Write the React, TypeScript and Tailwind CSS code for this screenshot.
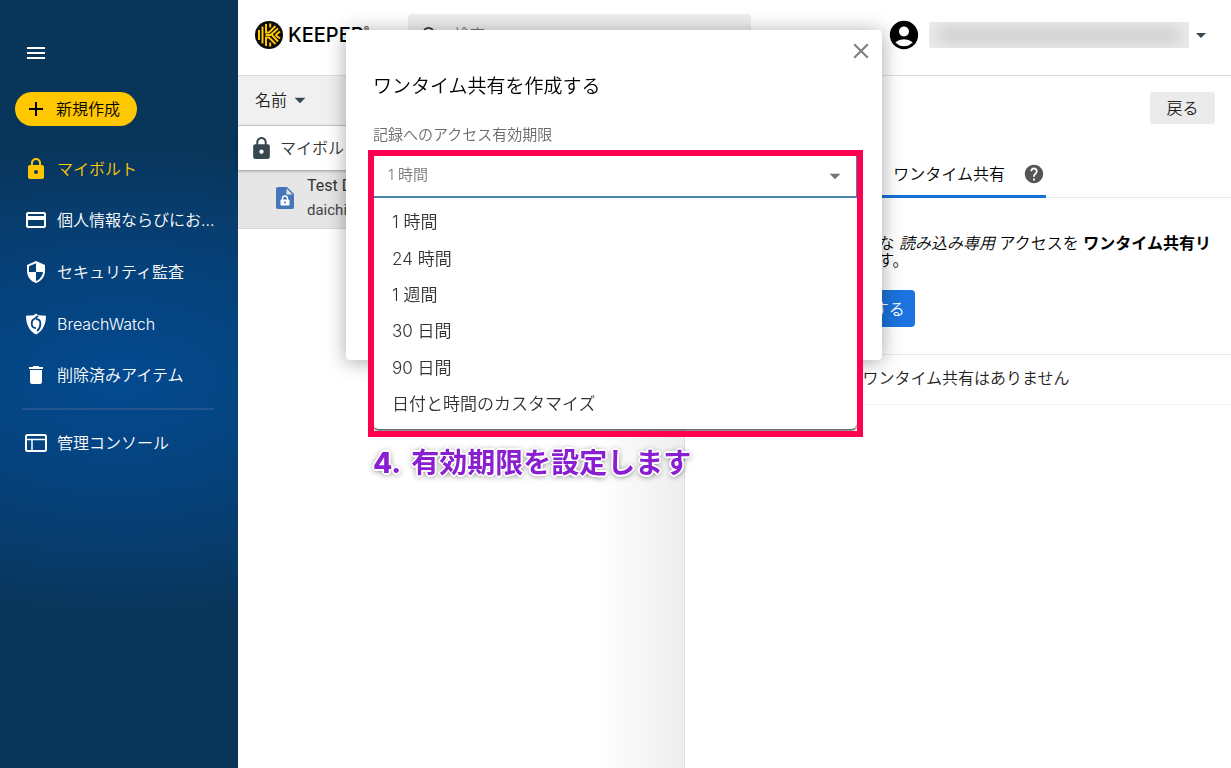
import { useState, type ReactNode } from 'react';
import { clsx } from 'clsx';
import {
  MdAccountCircle,
  MdAdd,
  MdArrowDropDown,
  MdClose,
  MdCreditCard,
  MdDelete,
  MdHelp,
  MdLock,
  MdMenu,
  MdSearch,
  MdSecurity,
} from 'react-icons/md';

const EXPIRY_OPTIONS = ['1 時間', '24 時間', '1 週間', '30 日間', '90 日間', '日付と時間のカスタマイズ'];

function BreachWatchIcon() {
  return (
    <svg viewBox="0 0 24 24" className="h-6 w-6" aria-hidden="true">
      <path d="M12 1.500 14.500 3.200 22 3.800C22 12 19 19 12 22.500 5 19 2 12 2 3.800L9.500 3.200Z" fill="white" />
      <path d="M14 3.800 11 6.500C8.800 7.300 7.700 9 7.700 11.200c0 2.800 1.800 4.800 4.300 4.900" fill="none" stroke="#044583" strokeWidth="1.800" />
      <path d="M12 7.200c2.600 0 4.400 1.800 4.400 4.500 0 3-1.200 5.400-3.200 7.300" fill="none" stroke="#044583" strokeWidth="1.800" />
      <circle cx="12" cy="11.700" r="2.400" fill="white" />
    </svg>
  );
}

function ConsoleIcon() {
  return (
    <svg viewBox="0 0 24 24" className="h-6 w-6" fill="none" stroke="currentColor" aria-hidden="true">
      <rect x="2" y="4" width="20" height="16" rx="1.500" strokeWidth="2" />
      <path d="M2 8.500h20M8 8.500V20" strokeWidth="1.500" />
    </svg>
  );
}

function KeeperMark() {
  return (
    <svg viewBox="0 0 28 28" className="h-7 w-7 shrink-0" aria-hidden="true">
      <circle cx="14" cy="14" r="14" fill="#0b0b0b" />
      <g fill="none" stroke="#ffc700" strokeWidth="2">
        <path d="M4 9v10M7.500 5.500v17" />
        <path d="M11 3v8.500h3l6.500-6.500M15.200 2.500v4" />
        <path d="M11 25v-8.500h3l6.500 6.500M15.200 25.500v-4" />
        <path d="M10.500 14h5l7.500-6.500M17 14l6 6.500M20.500 14l4.500-3.500M20.500 14l4.500 3.500" />
      </g>
    </svg>
  );
}

function RecordIcon() {
  return (
    <svg viewBox="0 0 18 22" className="h-[22px] w-[18px] shrink-0" aria-hidden="true">
      <path d="M2 0h9l7 7v13a2 2 0 0 1-2 2H2a2 2 0 0 1-2-2V2a2 2 0 0 1 2-2z" fill="#4576b9" />
      <path d="M10.500 1.500v6H16.500z" fill="#e6e6e6" />
      <rect x="4.500" y="12.500" width="9" height="6" rx="0.800" fill="white" />
      <path d="M6.500 13v-1.500a2.500 2.500 0 0 1 5 0V13" fill="none" stroke="white" strokeWidth="1.300" />
      <circle cx="9" cy="15.500" r="1" fill="#4576b9" />
    </svg>
  );
}

interface NavItemProps {
  icon: ReactNode;
  label: string;
  active?: boolean;
}

function NavItem({ icon, label, active = false }: NavItemProps) {
  return (
    <a
      href="#"
      className={clsx('flex flex-1 items-center gap-[9px] pl-6', active ? 'text-[#ffc700]' : 'text-white')}
    >
      {icon}
      <span className="whitespace-nowrap">{label}</span>
    </a>
  );
}

function Sidebar() {
  return (
    <aside className="flex w-[238px] shrink-0 flex-col bg-[#08355a] bg-[radial-gradient(ellipse_420px_235px_at_50%_380px,#034a90_0%,#05427c_45%,#083c6c_75%,#08355a_100%)]">
      <button type="button" aria-label="メニュー" className="mt-[41px] ml-6 h-6 w-6 text-white">
        <MdMenu size={24} />
      </button>
      <button
        type="button"
        className="mt-[27px] ml-[15px] flex h-[34px] w-[122px] items-center gap-2 rounded-full bg-[#ffc700] pl-[9px] text-black"
      >
        <MdAdd size={24} />
        新規作成
      </button>
      <nav className="mt-[17px] flex h-[258px] flex-col">
        <NavItem active icon={<MdLock size={24} />} label="マイボルト" />
        <NavItem icon={<MdCreditCard size={24} />} label="個人情報ならびにお..." />
        <NavItem icon={<MdSecurity size={24} />} label="セキュリティ監査" />
        <NavItem
          icon={<BreachWatchIcon />}
          label="BreachWatch"
        />
        <NavItem icon={<MdDelete size={24} />} label="削除済みアイテム" />
      </nav>
      <hr className="mr-6 ml-[22px] mt-[7px] border-t-2 border-[#24558f]" />
      <nav className="mt-[7px] flex h-[52px] flex-col">
        <NavItem icon={<ConsoleIcon />} label="管理コンソール" />
      </nav>
    </aside>
  );
}

function Header() {
  return (
    <header className="flex h-[76px] shrink-0 items-center border-b border-[#dcdcdc] pb-1.5 pl-[17px]">
      <KeeperMark />
      <div className="ml-[5px] flex w-[120px] items-start font-['Inter'] text-xl leading-none font-medium text-black">
        KEEPER<span className="text-[8px]">®</span>
      </div>
      <label className="flex h-[42px] w-[343px] items-center gap-3 rounded bg-[#eeeeee] pl-3 text-[#333]">
        <MdSearch size={24} />
        <input type="search" placeholder="検索" className="w-full bg-transparent outline-none placeholder:text-[#777]" />
      </label>
      <button type="button" className="mr-[26px] ml-auto flex items-center gap-2" aria-label="アカウント">
        <MdAccountCircle size={34} className="text-black" />
        <span className="h-[26px] w-[260px] overflow-hidden bg-[#ececec]">
          <span className="mx-2 mt-1.5 block h-[14px] rounded bg-[#c8c8c8] blur-sm" />
        </span>
        <MdArrowDropDown size={24} className="-mx-2 text-[#37474f]" />
      </button>
    </header>
  );
}

function RecordList() {
  return (
    <section className="w-[447px] shrink-0 border-r border-[#dedede] bg-linear-to-r from-white from-80% to-[#eeeeee]">
      <button
        type="button"
        className="flex h-[50px] w-full items-center border-b border-[#cfcfcf] bg-[#f0f0f0] pb-0.5 pl-[17px] text-[#222]"
      >
        名前
        <MdArrowDropDown size={26} className="text-[#37474f]" />
      </button>
      <div className="relative flex h-[44px] items-center gap-1.5 bg-white pl-[11px] text-[#333] shadow-[0_1px_3px_rgba(0,0,0,0.35)]">
        <MdLock size={25} className="text-[#37474f]" />
        マイボルト
      </div>
      <a
        href="#"
        className="flex h-[59px] items-center gap-[13px] border-b border-[#d8d8d8] bg-[#e6e6e6] pb-0.5 pl-[38px] text-[#333]"
      >
        <RecordIcon />
        <span className="flex flex-col font-['Roboto'] leading-6 font-normal">
          <span>Test Data</span>
          <span className="text-[15px] text-[#444]">daichi</span>
        </span>
      </a>
    </section>
  );
}

function SharePanel() {
  return (
    <section className="min-w-0 flex-1">
      <div className="flex justify-end px-4 pt-4">
        <button type="button" className="h-8 w-[65px] rounded-[3px] bg-[#ebebeb] text-[#222]">
          戻る
        </button>
      </div>
      <div className="mt-7 flex h-[46px] border-b border-[#e8e8e8] pl-[19px]" role="tablist">
        <button
          type="button"
          role="tab"
          aria-selected="true"
          className="-mb-px flex w-[342px] items-center justify-end gap-[18px] border-b-[3px] border-[#1a6fd6] pr-px text-black"
        >
          ワンタイム共有
          <MdHelp size={22} className="text-[#555]" />
        </button>
      </div>
      <div className="border-b border-[#e8e8e8] pt-[37px] pr-2.5 pb-[27px] pl-[18px]">
        <p className="leading-[17px] text-black">
          指定したデバイスに安全な <em>読み込み専用</em> アクセスを{' '}
          <strong className="font-bold">ワンタイム共有リンク</strong>
          を使って共有できます。
        </p>
        <button type="button" className="mt-[21px] h-[37px] rounded bg-[#1b74df] px-2.5 text-white">
          ワンタイム共有を作成する
        </button>
      </div>
      <p className="flex h-[50px] items-center justify-center border-b border-[#f2f2f2] pb-1 pl-4 text-[#222]">
        ワンタイム共有はありません
      </p>
    </section>
  );
}

function ExpiryField() {
  const [value, setValue] = useState(EXPIRY_OPTIONS[0]);

  return (
    <div className="mt-6">
      <label htmlFor="expiry" className="block text-[15px] leading-5 text-[#6a6a6a]">
        記録へのアクセス有効期限
      </label>
      <div className="relative mt-2.5 w-[484px]">
        <div className="relative">
          <select
            id="expiry"
            value={value}
            onChange={(e) => setValue(e.target.value)}
            className="block h-[43px] w-full appearance-none border border-b-2 border-[#4a84a8] bg-white pb-0.5 pl-[14px] text-[15px] text-[#7a7a7a] outline-none"
          >
            {EXPIRY_OPTIONS.map((option) => (
              <option key={option}>{option}</option>
            ))}
          </select>
          <MdArrowDropDown size={26} className="pointer-events-none absolute top-2 right-[9px] text-[#757575]" />
        </div>
        {/* open menu */}
        <ul
          role="listbox"
          aria-label="有効期限"
          className="absolute top-full left-0 flex h-[231px] w-full flex-col rounded-b-md bg-white pt-[7px] pb-1.5 shadow-[0_2px_2px_rgba(0,0,0,0.6)]"
        >
          {EXPIRY_OPTIONS.map((option) => (
            <li key={option} role="option" aria-selected={option === value} className="flex flex-1">
              <button
                type="button"
                onClick={() => setValue(option)}
                className="flex-1 pl-[19px] text-left text-[17px] text-[#333]"
              >
                {option}
              </button>
            </li>
          ))}
        </ul>
        {/* highlight frame and caption */}
        <div className="pointer-events-none absolute -top-[5px] -left-[5px] h-[287px] w-[495px] border-[6px] border-[#ff0050]">
          <p className="absolute top-full -left-px mt-3.5 flex gap-2.5 text-[28px] leading-9 font-bold whitespace-nowrap text-[#8a1fd1] [text-shadow:-2px_0_#fff,2px_0_#fff,0_-2px_#fff,0_2px_#fff,-1px_-1px_#fff,1px_1px_#fff,1px_-1px_#fff,-1px_1px_#fff,0_1px_6px_rgba(0,0,0,0.8)]">
            <span className="font-extrabold">4.</span>
            <span>有効期限を設定します</span>
          </p>
        </div>
      </div>
    </div>
  );
}

function ShareDialog() {
  return (
    <div className="fixed inset-0 z-10 flex items-start justify-center pt-[30px] pr-[3px]">
      <div
        role="dialog"
        aria-labelledby="share-title"
        className="relative min-h-[330px] w-[536px] rounded bg-white px-[27px] pt-[43px] shadow-[0_2px_20px_rgba(0,0,0,0.35)]"
      >
        <button type="button" aria-label="閉じる" className="absolute top-2 right-2 text-[#808080]">
          <MdClose size={26} />
        </button>
        <h2 id="share-title" className="text-[19px] leading-7 font-[350] text-black">
          ワンタイム共有を作成する
        </h2>
        <ExpiryField />
      </div>
    </div>
  );
}

export default function App() {
  return (
    <div
      lang="ja"
      className="flex min-h-screen bg-white font-['Inter','Noto_Sans_CJK_JP',sans-serif] text-base font-[350]"
    >
      <Sidebar />
      <div className="flex min-w-0 flex-1 flex-col">
        <Header />
        <main className="flex flex-1">
          <RecordList />
          <SharePanel />
        </main>
      </div>
      <ShareDialog />
    </div>
  );
}
